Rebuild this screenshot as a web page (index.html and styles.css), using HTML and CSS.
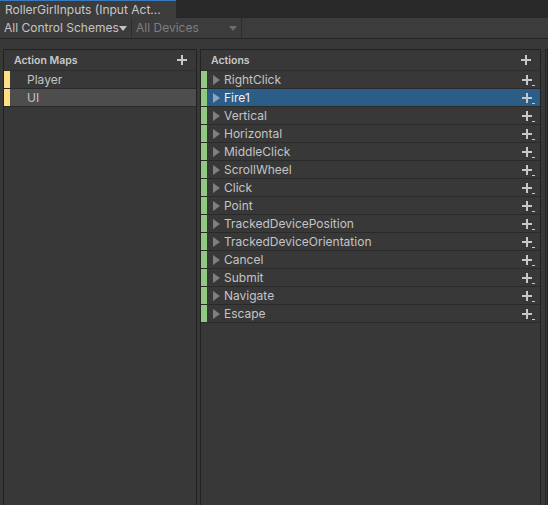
FILE: index.html
```html
<!DOCTYPE html>
<html>
	<head>
		<meta charset="UTF-8">
		<title>RollerGirlInputs</title>
		<link rel="stylesheet" href="styles.css">
	</head>
	<body>
		<div class="tabbar">
			<div class="tab">RollerGirlInputs (Input Act...</div>
		</div>
		<div class="toolbar">
			<div class="drop schemes">All Control Schemes<span class="arrow"></span></div>
			<div class="drop devices">All Devices<span class="arrow"></span></div>
		</div>
		<div class="main">
			<div class="panel maps">
				<div class="head"><span>Action Maps</span><svg class="plus" width="10" height="10" viewBox="0 0 10 10"><path d="M4 0h2v10H4zM0 4h10v2H0z"/></svg></div>
				<div class="row map"><span class="stripe"></span>Player</div>
				<div class="row map active"><span class="stripe"></span>UI</div>
			</div>
			<div class="panel actions">
				<div class="head"><span>Actions</span><svg class="plus" width="10" height="10" viewBox="0 0 10 10"><path d="M4 0h2v10H4zM0 4h10v2H0z"/></svg></div>
				<div id="list"></div>
			</div>
			<div class="panel props">
				<div class="head"></div>
			</div>
		</div>
		<script>
			var names=["RightClick","Fire1","Vertical","Horizontal","MiddleClick","ScrollWheel","Click","Point","TrackedDevicePosition","TrackedDeviceOrientation","Cancel","Submit","Navigate","Escape"];
			var list=document.getElementById("list");
			for(var i=0;i<names.length;i++){
				var row=document.createElement("div");
				row.className="row act"+(i==1?" selected":"");
				row.innerHTML='<span class="stripe"></span><span class="tri"></span><span class="name">'+names[i]+'</span>'+
					'<svg class="plus" width="13" height="12" viewBox="0 0 13 12"><path d="M4 0h2v10H4zM0 4h10v2H0zM10 10h3v1h-3z"/></svg>';
				list.appendChild(row);
			}
		</script>
	</body>
</html>
```

FILE: styles.css
```css
body{
	margin: 0;
	width: 548px;
	height: 505px;
	overflow: hidden;
	background: #383838;
	color: #c4c4c4;
	font-family: Inter, "Noto Sans", sans-serif;
	font-size: 12px;
}
.tabbar{
	height: 18px;
	background: #282828;
	display: flex;
}
.tab{
	width: 171px;
	padding-left: 5px;
	background: #3c3c3c;
	border-top: 1px solid #3a79bb;
	line-height: 17px;
	color: #c8c8c8;
}
.toolbar{
	height: 20px;
	background: #3c3c3c;
	border-bottom: 1px solid #232323;
	display: flex;
}
.drop{
	position: relative;
	line-height: 20px;
	padding-left: 4px;
	border-right: 1px solid #2d2d2d;
}
.schemes{
	width: 127px;
}
.devices{
	width: 105px;
	color: #7e7e7e;
}
.arrow{
	position: absolute;
	right: 4px;
	top: 8px;
	border-left: 4px solid transparent;
	border-right: 4px solid transparent;
	border-top: 5px solid #c4c4c4;
}
.devices .arrow{
	border-top-color: #6e6e6e;
}
.main{
	display: flex;
	padding: 10px 0 0 3px;
	height: 456px;
}
.panel{
	border: 1px solid #232323;
	border-bottom: none;
	background: #383838;
	flex-shrink: 0;
}
.maps{
	width: 192px;
}
.actions{
	width: 339px;
	margin-left: 3px;
}
.props{
	flex: 1 1 0;
	min-width: 0;
	margin-left: 4px;
}
.head{
	height: 20px;
	display: flex;
	align-items: center;
	justify-content: space-between;
	padding: 0 9px 0 10px;
	font-size: 10.5px;
	font-weight: 600;
	color: #c8c8c8;
	border-bottom: 1px solid #2e2e2e;
}
.props .head{
	padding: 0;
	border-bottom-color: #232323;
}
.plus{
	fill: #c8c8c8;
	display: block;
}
.row{
	height: 17px;
	border-bottom: 1px solid #2a2a2a;
	display: flex;
	align-items: center;
	font-size: 12px;
}
.stripe{
	width: 6px;
	align-self: stretch;
	flex-shrink: 0;
}
.map .stripe{
	background: #ffdf84;
	margin-right: 17px;
}
.map.active{
	background: #4d4d4d;
}
.act .stripe{
	background: #93c884;
	margin-right: 6px;
}
.tri{
	border-top: 5px solid transparent;
	border-bottom: 5px solid transparent;
	border-left: 7px solid #7f7f7f;
	margin-right: 4px;
}
.name{
	flex: 1;
}
.act .plus{
	margin-right: 5px;
	margin-top: 3px;
}
.selected{
	background: #2c5d87;
	color: #f0f0f0;
}
.selected .tri{
	border-left-color: #8aa6c0;
}
```
